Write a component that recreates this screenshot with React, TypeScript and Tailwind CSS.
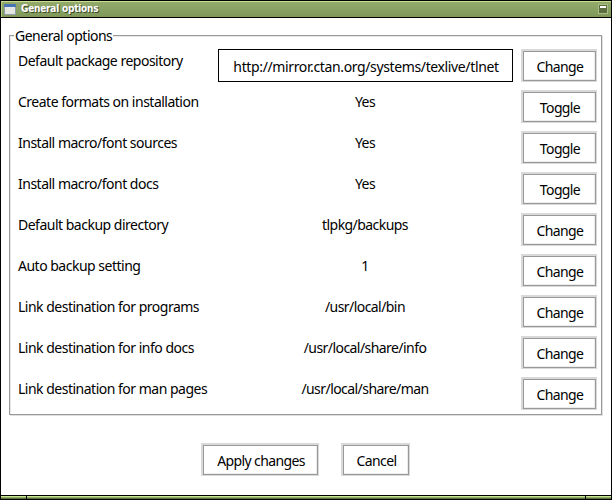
type Option = { label: string; value: string; action: string; boxed?: boolean };

const options: Option[] = [
  { label: 'Default package repository', value: 'http://mirror.ctan.org/systems/texlive/tlnet', action: 'Change', boxed: true },
  { label: 'Create formats on installation', value: 'Yes', action: 'Toggle' },
  { label: 'Install macro/font sources', value: 'Yes', action: 'Toggle' },
  { label: 'Install macro/font docs', value: 'Yes', action: 'Toggle' },
  { label: 'Default backup directory', value: 'tlpkg/backups', action: 'Change' },
  { label: 'Auto backup setting', value: '1', action: 'Change' },
  { label: 'Link destination for programs', value: '/usr/local/bin', action: 'Change' },
  { label: 'Link destination for info docs', value: '/usr/local/share/info', action: 'Change' },
  { label: 'Link destination for man pages', value: '/usr/local/share/man', action: 'Change' },
];

function Button({ children, width }: { children: string; width: string }) {
  return (
    <button className={`${width} h-[33px] shrink-0 border-t-2 border-l-2 border-r border-b border-[#d9d9d9] bg-white tracking-[-0.62px]`}>
      <span className="flex h-full items-center justify-center border border-[#999999] pt-px pl-px whitespace-nowrap shadow-[inset_-1px_-1px_0_#ececec]">
        {children}
      </span>
    </button>
  );
}

function TitleBar() {
  return (
    <header className="flex h-[18px] shrink-0 items-center justify-between border-y border-black bg-linear-to-b from-[#94ab6c] to-[#7f985a] pr-[3px] pl-[3px] shadow-[inset_0_1px_0_#c5e08f,inset_1px_0_0_#b5cf80]">
      <div className="flex items-center">
        <svg width="12" height="11" viewBox="0 0 12 11" shapeRendering="crispEdges">
          <rect width="12" height="11" fill="#8d9aa8" />
          <rect x="0" y="0" width="12" height="3" fill="#4a74b4" />
          <rect x="1" y="3" width="10" height="7" fill="#e4e6e2" />
        </svg>
        <span className="ml-[5px] [font-family:'DejaVu_Sans',sans-serif] text-[10px] leading-[14px] font-bold tracking-[-0.22px] whitespace-nowrap text-white [font-stretch:75%] [text-shadow:1px_1px_0_#3d4a26]">
          General options
        </span>
      </div>
      <svg width="10" height="10" viewBox="0 0 10 10" shapeRendering="crispEdges">
        <rect width="10" height="10" fill="#a9bd85" />
        <rect x="1" y="1" width="8" height="8" fill="#5c6e40" />
        <rect x="2" y="2" width="6" height="2" fill="#ffffff" />
      </svg>
    </header>
  );
}

export default function App() {
  return (
    <div className="flex h-[500px] w-[612px] flex-col overflow-hidden border-x border-black bg-white [font-family:'Noto_Sans',sans-serif] text-[14px] leading-[18px] tracking-[-0.5px] text-black">
      <TitleBar />
      <main className="flex-1 pt-[17px]">
        <section className="relative ml-2 h-[380px] w-[593px] border border-[#999999] shadow-[inset_1px_1px_0_#e8e8e8,1px_1px_0_#e0e0e0]">
          <h1 className="absolute top-[-9px] left-[4px] bg-white px-px whitespace-nowrap">General options</h1>
          <div className="pt-[13px] pl-2">
            {options.map((o) => (
              <div key={o.label} className="flex h-[41px] items-start">
                <span className="w-[200px] shrink-0 pt-[3px] whitespace-nowrap">{o.label}</span>
                {o.boxed ? (
                  <span className="flex h-[33px] w-[295px] shrink-0 items-center justify-center border border-black pt-[3px] pl-px tracking-[-0.37px]">
                    {o.value}
                  </span>
                ) : (
                  <span className="w-[295px] shrink-0 pt-[3px] pr-px text-center tracking-[-0.56px]">{o.value}</span>
                )}
                <span className="ml-2 flex">
                  <Button width="w-[76px]">{o.action}</Button>
                </span>
              </div>
            ))}
          </div>
        </section>
        <div className="mt-[28px] flex gap-[22px] pl-[200px]">
          <Button width="w-[118px]">Apply changes</Button>
          <Button width="w-[69px]">Cancel</Button>
        </div>
      </main>
      <footer className="flex h-[5px] shrink-0 gap-px border-y border-black bg-black">
        <div className="w-[25px] border-t border-b border-t-[#c8e88f] border-b-[#5d7040] bg-[#8fa866]" />
        <div className="flex-1 border-t border-b border-t-[#c8e88f] border-b-[#5d7040] bg-[#8fa866]" />
        <div className="w-[25px] border-t border-b border-t-[#c8e88f] border-b-[#5d7040] bg-[#8fa866]" />
      </footer>
    </div>
  );
}
